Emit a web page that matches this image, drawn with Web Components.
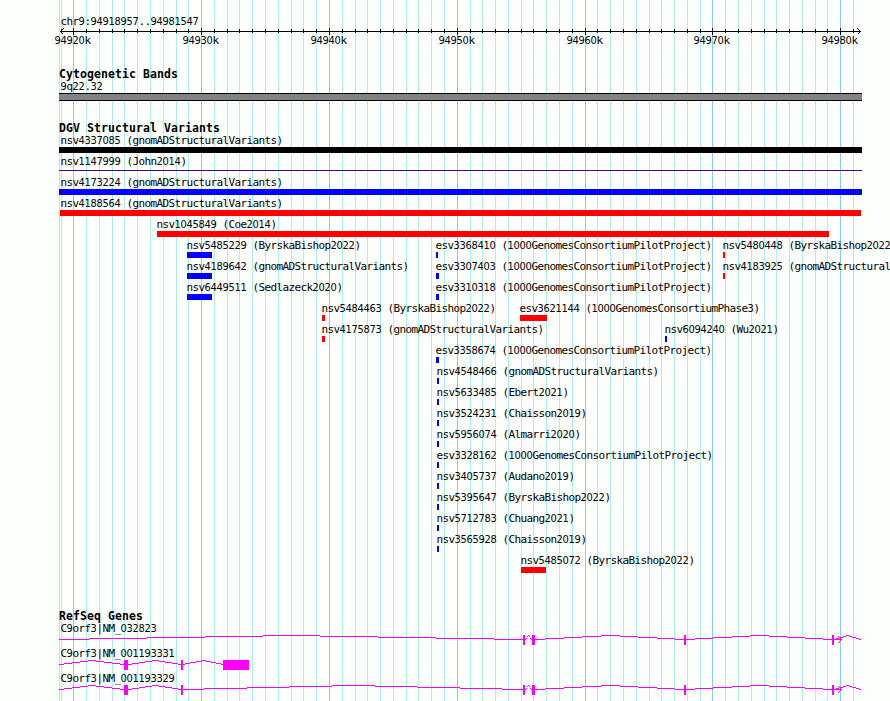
<!DOCTYPE html>
<html lang="en">
<head>
<meta charset="utf-8">
<title>chr9:94918957..94981547</title>
<style>
html, body { margin: 0; height: 701px; overflow: hidden; background: #fdfffc; color: #000; }
</style>
</head>
<body>
<genome-browser></genome-browser>
<script>
const START = 94918957, END = 94981547, LEFT = 60, SPAN = 800;
const toX = bp => Math.round(LEFT + (bp - START) * SPAN / (END - START));

/* Fixed-cell caption; digits use a face with an open zero. */
class FeatureLabel extends HTMLElement {
  connectedCallback() {
    const root = this.attachShadow({ mode: 'open' });
    const text = this.getAttribute('text').replace(/\d+/g, d => `<span>${d}</span>`);
    root.innerHTML = `<style>
      :host { display: block; height: 13px; padding-left: 0.5px; font: 11px/13px "DejaVu Sans Mono", monospace;
        letter-spacing: -0.622px; white-space: pre; }
      span { font-family: "DejaVu Sans Condensed", "DejaVu Sans", sans-serif; letter-spacing: -0.3px; line-height: 0; }
    </style>${text}`;
  }
}
customElements.define('feature-label', FeatureLabel);

class GridLines extends HTMLElement {
  connectedCallback() {
    const root = this.attachShadow({ mode: 'open' });
    let lines = '<rect x="59" width="1" height="701" fill="#afeeee"/>';
    for (let k = 94919; k <= 94981; k++)
      lines += `<rect x="${toX(k * 1000)}" width="1" height="701" fill="${k % 10 ? '#afeeee' : '#87ceeb'}"/>`;
    root.innerHTML = `<style>:host { position: absolute; inset: 0; z-index: -1; } svg { display: block; }</style>
      <svg width="890" height="701">${lines}</svg>`;
  }
}
customElements.define('grid-lines', GridLines);

class ScaleRuler extends HTMLElement {
  connectedCallback() {
    const root = this.attachShadow({ mode: 'open' });
    let ticks = '', labels = '';
    for (let k = 94919; k <= 94981; k++) {
      const x = toX(k * 1000), major = k % 10 === 0;
      ticks += major ? `<rect x="${x}" y="0" width="1" height="7"/>` : `<rect x="${x}" y="1" width="1" height="4"/>`;
      if (major) labels += `<feature-label text="${k}k" style="margin-left:${x - 19}px"></feature-label>`;
    }
    root.innerHTML = `<style>
      :host { display: flex; flex-direction: column; padding-top: 15px; height: 53px; }
      svg { display: block; flex: none; }
      .title { margin-left: 60px; }
      .labels { display: grid; margin-top: -1px; justify-items: start; }
      .labels > * { grid-area: 1 / 1; }
    </style>
    <feature-label class="title" text="chr9:94918957..94981547"></feature-label>
    <svg width="890" height="7" shape-rendering="crispEdges"><rect x="60" y="3" width="801" height="1"/>${ticks}
      <path d="M63.5 .5 60.5 3.5 63.5 6.5M857.5 .5 860.5 3.5 857.5 6.5" fill="none" stroke="#000"/></svg>
    <div class="labels">${labels}</div>`;
  }
}
customElements.define('scale-ruler', ScaleRuler);

class BrowserTrack extends HTMLElement {
  connectedCallback() {
    this.attachShadow({ mode: 'open' }).innerHTML = `<style>
      :host { display: flex; flex-direction: column; }
      h2 { margin: 0 0 0 59px; height: 12px; font: bold 11.5px/13px "DejaVu Sans Mono", monospace;
        letter-spacing: 0.077px; white-space: pre; }
    </style><h2>${this.getAttribute('heading')}</h2><slot></slot>`;
  }
}
customElements.define('browser-track', BrowserTrack);

class CytoBand extends HTMLElement {
  connectedCallback() {
    this.attachShadow({ mode: 'open' }).innerHTML = `<style>
      :host { display: block; }
      feature-label { margin-left: 60px; }
      div { margin-left: 59px; width: 803px; height: 8px; box-sizing: border-box;
        background: #848284; border: solid #000; border-width: 1px 0; }
    </style><feature-label text="${this.getAttribute('name')}"></feature-label><div></div>`;
  }
}
customElements.define('cyto-band', CytoBand);

/* One bump row; features share a single grid cell and are offset by their start. */
class VariantRow extends HTMLElement {
  set features(list) {
    const root = this.shadowRoot || this.attachShadow({ mode: 'open' });
    root.innerHTML = `<style>
      :host { display: grid; grid-template-columns: 890px; height: 21px; justify-items: start; }
      .feature { grid-area: 1 / 1; }
      .bar { height: 6px; }
      .thin { height: 1px; margin-top: 10px; }
    </style>` + list.map(([name, x0, x1, color, thin]) => {
      const tx = Math.max(60, x0 - 1);
      return `<div class="feature" style="margin-left:${tx}px"><feature-label text="${name}"></feature-label>
        <div class="bar" style="margin-left:${x0 - tx}px;width:${x1 - x0}px;${thin
          ? `height:1px;margin-top:2px;` : ''}background:${color}"></div></div>`;
    }).join('');
  }
}
customElements.define('variant-row', VariantRow);

/* Horizontal pixel runs of a straight line between two points, both ends included. */
const runs = (x0, y0, x1, y1) => {
  let out = '', from = x0, prev = y0;
  for (let x = x0; x <= x1 + 1; x++) {
    const y = Math.round(y0 + (y1 - y0) * (x - x0) / (x1 - x0));
    if (y !== prev || x === x1 + 1) {
      out += `<rect x="${from}" y="${prev}" width="${x - from}" height="1"/>`;
      from = x; prev = y;
    }
  }
  return out;
};

class GeneModel extends HTMLElement {
  set model({ name, exons, introns, arrow }) {
    const root = this.shadowRoot || this.attachShadow({ mode: 'open' });
    const boxes = exons.map(([a, b]) => `<rect x="${a}" width="${b - a}" height="10"/>`).join('');
    const hats = introns.map(([a, b]) => {
      const mid = Math.round((a + b) / 2);
      return runs(a, 4, mid, 0) + runs(mid, 0, b, 4);
    }).join('');
    const head = arrow ? '<rect x="835" y="4" width="7" height="1"/><rect x="838" y="1" width="1" height="1"/><rect x="839" y="2" width="1" height="1"/><rect x="840" y="3" width="1" height="1"/><rect x="840" y="5" width="1" height="1"/><rect x="839" y="6" width="1" height="1"/><rect x="838" y="7" width="1" height="1"/>' : '';
    root.innerHTML = `<style>
      :host { display: block; height: 25px; }
      feature-label { margin-left: 60px; }
      svg { display: block; }
    </style><feature-label text="${name}"></feature-label>
    <svg width="890" height="10" fill="#f0f" shape-rendering="crispEdges">${hats}${head}${boxes}</svg>`;
  }
}
customElements.define('gene-model', GeneModel);

class GenomeBrowser extends HTMLElement {
  connectedCallback() {
    const root = this.attachShadow({ mode: 'open' });
    root.innerHTML = `<style>
      :host { display: flex; flex-direction: column; position: relative; z-index: 0; width: 890px; height: 701px; overflow: hidden; }
      #bands { height: 54px; } #variants { height: 488px; }
    </style>
    <grid-lines></grid-lines><scale-ruler></scale-ruler>
    <browser-track id="bands" heading="Cytogenetic Bands"><cyto-band name="9q22.32"></cyto-band></browser-track>
    <browser-track id="variants" heading="DGV Structural Variants"></browser-track>
    <browser-track id="genes" heading="RefSeq Genes"></browser-track>`;

    const R = '#f00', B = '#00f', K = '#000', P = '1000GenomesConsortiumPilotProject';
    const rows = [
      [['nsv4337085 (gnomADStructuralVariants)', 59, 862, K]],
      [['nsv1147999 (John2014)', 59, 862, '#4b0082', true]],
      [['nsv4173224 (gnomADStructuralVariants)', 59, 862, B]],
      [['nsv4188564 (gnomADStructuralVariants)', 60, 861, R]],
      [['nsv1045849 (Coe2014)', 157, 829, R]],
      [['nsv5485229 (ByrskaBishop2022)', 187, 212, B], [`esv3368410 (${P})`, 436, 438, B], ['nsv5480448 (ByrskaBishop2022)', 723, 725, R]],
      [['nsv4189642 (gnomADStructuralVariants)', 187, 212, B], [`esv3307403 (${P})`, 436, 439, B], ['nsv4183925 (gnomADStructuralVariants)', 723, 725, R]],
      [['nsv6449511 (Sedlazeck2020)', 187, 212, B], [`esv3310318 (${P})`, 436, 439, B]],
      [['nsv5484463 (ByrskaBishop2022)', 322, 325, R], ['esv3621144 (1000GenomesConsortiumPhase3)', 520, 547, R]],
      [['nsv4175873 (gnomADStructuralVariants)', 322, 325, R], ['nsv6094240 (Wu2021)', 665, 667, B]],
      [[`esv3358674 (${P})`, 436, 439, B]],
      [['nsv4548466 (gnomADStructuralVariants)', 437, 439, B]],
      [['nsv5633485 (Ebert2021)', 437, 439, B]],
      [['nsv3524231 (Chaisson2019)', 437, 439, B]],
      [['nsv5956074 (Almarri2020)', 437, 439, B]],
      [[`esv3328162 (${P})`, 437, 439, B]],
      [['nsv3405737 (Audano2019)', 437, 439, B]],
      [['nsv5395647 (ByrskaBishop2022)', 437, 439, B]],
      [['nsv5712783 (Chuang2021)', 437, 439, B]],
      [['nsv3565928 (Chaisson2019)', 437, 439, B]],
      [['nsv5485072 (ByrskaBishop2022)', 521, 546, R]],
    ];
    for (const features of rows) {
      const row = document.createElement('variant-row');
      row.features = features;
      root.getElementById('variants').append(row);
    }

    const tailExons = [[523, 525], [532, 535], [684, 686], [832, 834]];
    const tailIntrons = [[525, 531], [535, 684], [685, 832], [834, 860]];
    const genes = [
      { name: 'C9orf3|NM_032823', exons: tailExons, introns: [[59, 523], ...tailIntrons], arrow: true },
      { name: 'C9orf3|NM_001193331', exons: [[124, 128], [181, 183], [223, 249]], introns: [[59, 124], [128, 181], [182, 223]] },
      { name: 'C9orf3|NM_001193329', exons: [[124, 128], [181, 183], ...tailExons], introns: [[59, 124], [128, 181], [182, 523], ...tailIntrons], arrow: true },
    ];
    for (const g of genes) {
      const el = document.createElement('gene-model');
      el.model = g;
      root.getElementById('genes').append(el);
    }
  }
}
customElements.define('genome-browser', GenomeBrowser);
</script>
</body>
</html>
